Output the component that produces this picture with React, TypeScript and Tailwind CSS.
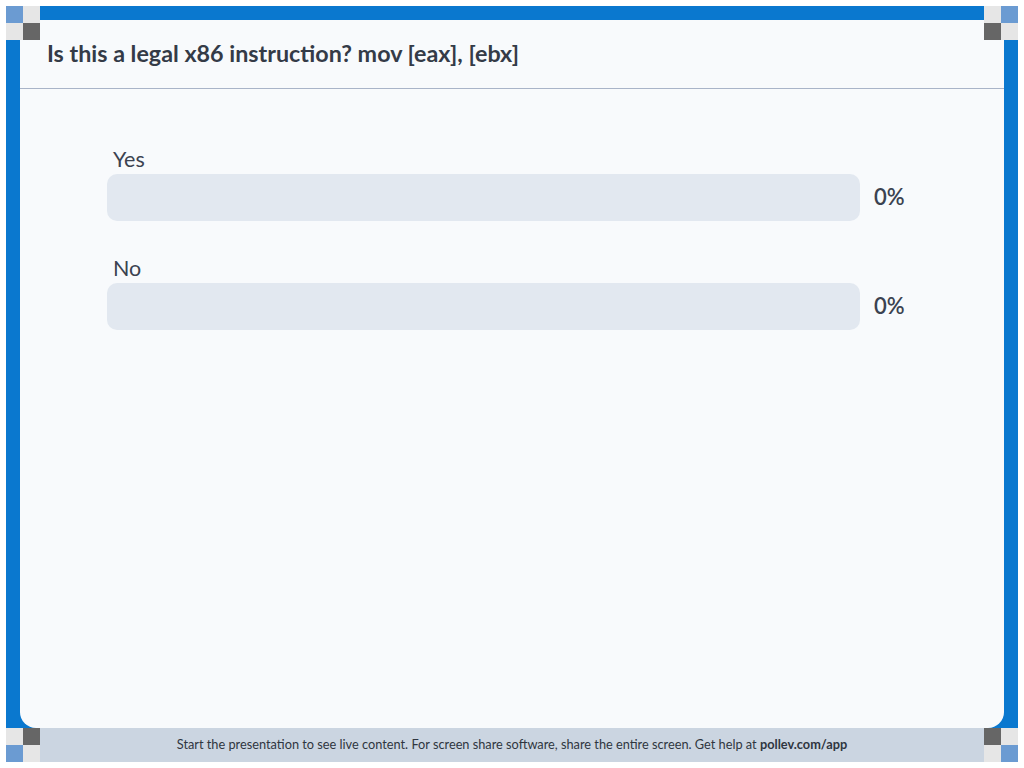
import React from "react";

const font = { fontFamily: '"Source Sans Pro", Lato, "Noto Sans", sans-serif' };

function Corner({ pos }: { pos: "tl" | "tr" | "bl" | "br" }) {
  const LB = "bg-[#6b9bd2]";
  const LG = "bg-[#e6e6e6]";
  const DG = "bg-[#666666]";
  let cells: string[] = [];
  let place = "";
  if (pos === "tl") {
    cells = [LB, LG, LG, DG];
    place = "top-0 left-0";
  } else if (pos === "tr") {
    cells = [LG, LB, DG, LG];
    place = "top-0 right-0";
  } else if (pos === "bl") {
    cells = [LG, DG, LB, LG];
    place = "bottom-0 left-0";
  } else {
    cells = [DG, LG, LG, LB];
    place = "bottom-0 right-0";
  }
  return (
    <div className={`absolute ${place} grid grid-cols-2 w-[34px] h-[34px]`}>
      {cells.map((c, i) => (
        <div key={i} className={`${c} w-[17px] h-[17px]`} />
      ))}
    </div>
  );
}

function Option({ label }: { label: string }) {
  return (
    <div className="flex flex-col">
      <div className="text-[21.5px] leading-[24px] text-[#3b4250] pl-[6px] mb-[3px]">{label}</div>
      <div className="flex items-center gap-[14px]">
        <div className="w-[753px] h-[47px] rounded-[10px] bg-[#e2e8f0]" />
        <div className="text-[22px] font-semibold text-[#3b4250] -mt-[2px]">0%</div>
      </div>
    </div>
  );
}

export default function App() {
  return (
    <div className="w-[1024px] h-[768px] bg-white p-[6px]" style={font}>
      <div className="relative w-[1012px] h-[756px] bg-[#0a78cf] flex flex-col">
        <div className="flex-1 px-[14px] pt-[14px] flex">
          <div className="flex-1 bg-[#f8fafc] rounded-[16px] flex flex-col overflow-hidden">
            <div className="h-[69px] border-b border-[#a9b4c8] flex items-center pl-[27px] pb-[1px]">
              <h1 className="text-[23.3px] font-bold text-[#343b47]">
                Is this a legal x86 instruction? mov [eax], [ebx]
              </h1>
            </div>
            <div className="flex flex-col gap-[35px] pl-[87px] pt-[58px]">
              <Option label="Yes" />
              <Option label="No" />
            </div>
          </div>
        </div>
        <div className="h-[34px] bg-[#cbd5e1] flex items-center justify-center text-[12.75px] text-[#2f3540]">
          <span>
            Start the presentation to see live content. For screen share software, share the entire screen. Get help at{" "}
            <span className="font-bold">pollev.com/app</span>
          </span>
        </div>
        <Corner pos="tl" />
        <Corner pos="tr" />
        <Corner pos="bl" />
        <Corner pos="br" />
      </div>
    </div>
  );
}
